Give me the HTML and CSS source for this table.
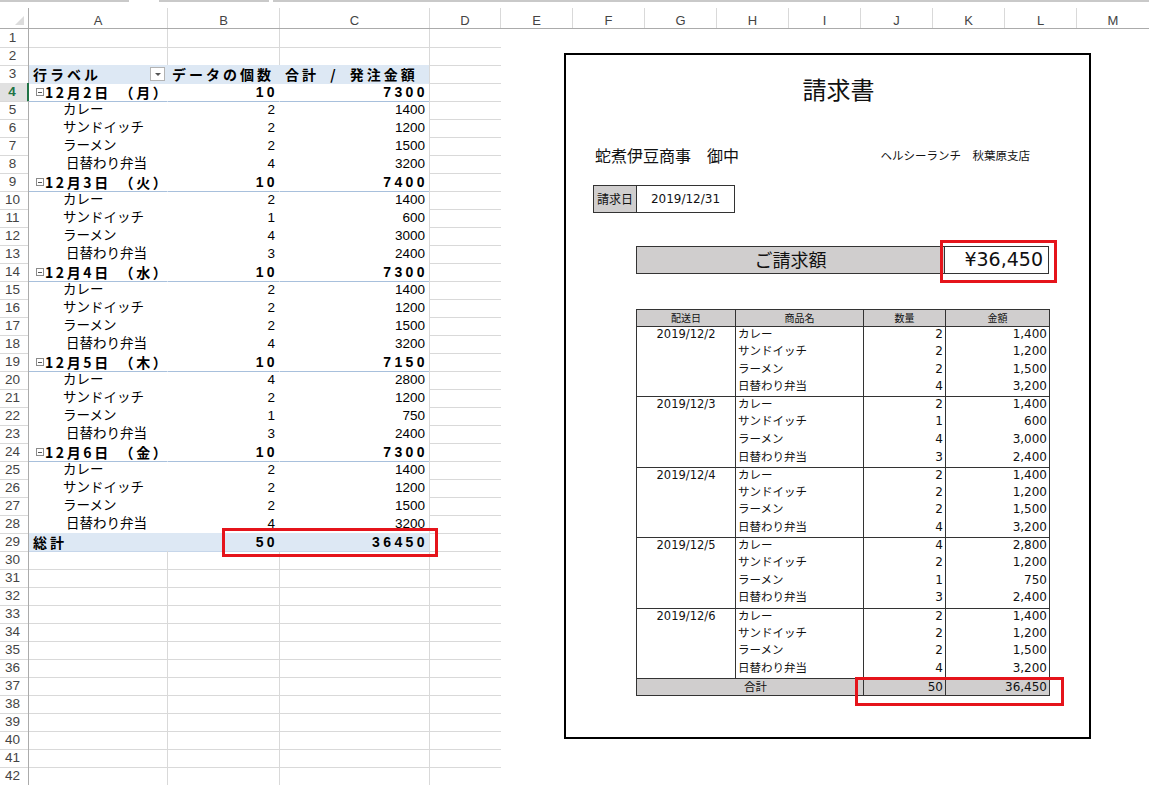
FILE: index.html
```html
<!DOCTYPE html>
<html lang="ja">
<head>
<meta charset="utf-8">
<title>請求書</title>
<link rel="stylesheet" href="styles.css">
</head>
<body>
<div class="screen">
  <div class="topbar"><span class="tb1"></span><span class="tb2"></span><span class="tb3"></span></div>
  <div class="colheads">
    <div class="ch corner"><span class="tri"></span></div>
    <div class="ch w-a">A</div>
    <div class="ch w-b">B</div>
    <div class="ch w-c">C</div>
    <div class="ch w-d">D</div>
    <div class="ch w-x">E</div>
    <div class="ch w-x">F</div>
    <div class="ch w-x">G</div>
    <div class="ch w-x">H</div>
    <div class="ch w-x">I</div>
    <div class="ch w-x">J</div>
    <div class="ch w-x">K</div>
    <div class="ch w-x">L</div>
    <div class="ch w-x last">M</div>
  </div>
  <div class="main">
    <div class="sheet">
      <div class="row"><div class="rh">1</div><div class="c ca"></div><div class="c cb"></div><div class="c cc"></div><div class="c cd"></div></div>
      <div class="row"><div class="rh">2</div><div class="c ca"></div><div class="c cb"></div><div class="c cc"></div><div class="c cd"></div></div>
      <div class="row pv pv-head"><div class="rh">3</div><div class="c ca"><span class="bt">行ラベル</span><span class="dd"></span></div><div class="c cb"><span class="bt">データの個数</span></div><div class="c cc"><span class="bt">合計 / 発注金額</span></div><div class="c cd"></div></div>

      <div class="row pv pv-group"><div class="rh active">4</div><div class="c ca"><span class="box"></span><span class="bt dt">12月2日 （月）</span></div><div class="c cb num bn">10</div><div class="c cc num bn">7300</div><div class="c cd"></div></div>
      <div class="row pv"><div class="rh">5</div><div class="c ca item">カレー</div><div class="c cb num">2</div><div class="c cc num">1400</div><div class="c cd"></div></div>
      <div class="row pv"><div class="rh">6</div><div class="c ca item">サンドイッチ</div><div class="c cb num">2</div><div class="c cc num">1200</div><div class="c cd"></div></div>
      <div class="row pv"><div class="rh">7</div><div class="c ca item">ラーメン</div><div class="c cb num">2</div><div class="c cc num">1500</div><div class="c cd"></div></div>
      <div class="row pv"><div class="rh">8</div><div class="c ca item item2">日替わり弁当</div><div class="c cb num">4</div><div class="c cc num">3200</div><div class="c cd"></div></div>

      <div class="row pv pv-group"><div class="rh">9</div><div class="c ca"><span class="box"></span><span class="bt dt">12月3日 （火）</span></div><div class="c cb num bn">10</div><div class="c cc num bn">7400</div><div class="c cd"></div></div>
      <div class="row pv"><div class="rh">10</div><div class="c ca item">カレー</div><div class="c cb num">2</div><div class="c cc num">1400</div><div class="c cd"></div></div>
      <div class="row pv"><div class="rh">11</div><div class="c ca item">サンドイッチ</div><div class="c cb num">1</div><div class="c cc num">600</div><div class="c cd"></div></div>
      <div class="row pv"><div class="rh">12</div><div class="c ca item">ラーメン</div><div class="c cb num">4</div><div class="c cc num">3000</div><div class="c cd"></div></div>
      <div class="row pv"><div class="rh">13</div><div class="c ca item item2">日替わり弁当</div><div class="c cb num">3</div><div class="c cc num">2400</div><div class="c cd"></div></div>

      <div class="row pv pv-group"><div class="rh">14</div><div class="c ca"><span class="box"></span><span class="bt dt">12月4日 （水）</span></div><div class="c cb num bn">10</div><div class="c cc num bn">7300</div><div class="c cd"></div></div>
      <div class="row pv"><div class="rh">15</div><div class="c ca item">カレー</div><div class="c cb num">2</div><div class="c cc num">1400</div><div class="c cd"></div></div>
      <div class="row pv"><div class="rh">16</div><div class="c ca item">サンドイッチ</div><div class="c cb num">2</div><div class="c cc num">1200</div><div class="c cd"></div></div>
      <div class="row pv"><div class="rh">17</div><div class="c ca item">ラーメン</div><div class="c cb num">2</div><div class="c cc num">1500</div><div class="c cd"></div></div>
      <div class="row pv"><div class="rh">18</div><div class="c ca item item2">日替わり弁当</div><div class="c cb num">4</div><div class="c cc num">3200</div><div class="c cd"></div></div>

      <div class="row pv pv-group"><div class="rh">19</div><div class="c ca"><span class="box"></span><span class="bt dt">12月5日 （木）</span></div><div class="c cb num bn">10</div><div class="c cc num bn">7150</div><div class="c cd"></div></div>
      <div class="row pv"><div class="rh">20</div><div class="c ca item">カレー</div><div class="c cb num">4</div><div class="c cc num">2800</div><div class="c cd"></div></div>
      <div class="row pv"><div class="rh">21</div><div class="c ca item">サンドイッチ</div><div class="c cb num">2</div><div class="c cc num">1200</div><div class="c cd"></div></div>
      <div class="row pv"><div class="rh">22</div><div class="c ca item">ラーメン</div><div class="c cb num">1</div><div class="c cc num">750</div><div class="c cd"></div></div>
      <div class="row pv"><div class="rh">23</div><div class="c ca item item2">日替わり弁当</div><div class="c cb num">3</div><div class="c cc num">2400</div><div class="c cd"></div></div>

      <div class="row pv pv-group"><div class="rh">24</div><div class="c ca"><span class="box"></span><span class="bt dt">12月6日 （金）</span></div><div class="c cb num bn">10</div><div class="c cc num bn">7300</div><div class="c cd"></div></div>
      <div class="row pv"><div class="rh">25</div><div class="c ca item">カレー</div><div class="c cb num">2</div><div class="c cc num">1400</div><div class="c cd"></div></div>
      <div class="row pv"><div class="rh">26</div><div class="c ca item">サンドイッチ</div><div class="c cb num">2</div><div class="c cc num">1200</div><div class="c cd"></div></div>
      <div class="row pv"><div class="rh">27</div><div class="c ca item">ラーメン</div><div class="c cb num">2</div><div class="c cc num">1500</div><div class="c cd"></div></div>
      <div class="row pv"><div class="rh">28</div><div class="c ca item item2">日替わり弁当</div><div class="c cb num">4</div><div class="c cc num">3200</div><div class="c cd"></div></div>

      <div class="row pv pv-total"><div class="rh">29</div><div class="c ca"><span class="bt">総計</span></div><div class="c cb num bn">50</div><div class="c cc num bn">36450</div><div class="c cd"></div></div>

      <div class="row"><div class="rh">30</div><div class="c ca"></div><div class="c cb"></div><div class="c cc"></div><div class="c cd"></div></div>
      <div class="row"><div class="rh">31</div><div class="c ca"></div><div class="c cb"></div><div class="c cc"></div><div class="c cd"></div></div>
      <div class="row"><div class="rh">32</div><div class="c ca"></div><div class="c cb"></div><div class="c cc"></div><div class="c cd"></div></div>
      <div class="row"><div class="rh">33</div><div class="c ca"></div><div class="c cb"></div><div class="c cc"></div><div class="c cd"></div></div>
      <div class="row"><div class="rh">34</div><div class="c ca"></div><div class="c cb"></div><div class="c cc"></div><div class="c cd"></div></div>
      <div class="row"><div class="rh">35</div><div class="c ca"></div><div class="c cb"></div><div class="c cc"></div><div class="c cd"></div></div>
      <div class="row"><div class="rh">36</div><div class="c ca"></div><div class="c cb"></div><div class="c cc"></div><div class="c cd"></div></div>
      <div class="row"><div class="rh">37</div><div class="c ca"></div><div class="c cb"></div><div class="c cc"></div><div class="c cd"></div></div>
      <div class="row"><div class="rh">38</div><div class="c ca"></div><div class="c cb"></div><div class="c cc"></div><div class="c cd"></div></div>
      <div class="row"><div class="rh">39</div><div class="c ca"></div><div class="c cb"></div><div class="c cc"></div><div class="c cd"></div></div>
      <div class="row"><div class="rh">40</div><div class="c ca"></div><div class="c cb"></div><div class="c cc"></div><div class="c cd"></div></div>
      <div class="row"><div class="rh">41</div><div class="c ca"></div><div class="c cb"></div><div class="c cc"></div><div class="c cd"></div></div>
      <div class="row"><div class="rh">42</div><div class="c ca"></div><div class="c cb"></div><div class="c cc"></div><div class="c cd"></div></div>
    </div>

    <div class="picture">
      <div class="doc">
        <div class="doc-title">請求書</div>
        <div class="parties">
          <span class="to">蛇煮伊豆商事　御中</span>
          <span class="from">ヘルシーランチ　秋葉原支店</span>
        </div>
        <div class="datebox">
          <span class="dlabel">請求日</span>
          <span class="dvalue">2019/12/31</span>
        </div>
        <div class="amount">
          <span class="alabel">ご請求額</span>
          <span class="avalue">¥36,450</span>
        </div>
        <table class="items">
          <colgroup><col class="k1"><col class="k2"><col class="k3"><col class="k4"></colgroup>
          <thead>
            <tr><th>配送日</th><th>商品名</th><th>数量</th><th>金額</th></tr>
          </thead>
          <tbody>
            <tr><td class="date" rowspan="4">2019/12/2</td><td>カレー</td><td class="n">2</td><td class="n">1,400</td></tr>
            <tr><td>サンドイッチ</td><td class="n">2</td><td class="n">1,200</td></tr>
            <tr><td>ラーメン</td><td class="n">2</td><td class="n">1,500</td></tr>
            <tr class="end"><td>日替わり弁当</td><td class="n">4</td><td class="n">3,200</td></tr>

            <tr><td class="date" rowspan="4">2019/12/3</td><td>カレー</td><td class="n">2</td><td class="n">1,400</td></tr>
            <tr><td>サンドイッチ</td><td class="n">1</td><td class="n">600</td></tr>
            <tr><td>ラーメン</td><td class="n">4</td><td class="n">3,000</td></tr>
            <tr class="end"><td>日替わり弁当</td><td class="n">3</td><td class="n">2,400</td></tr>

            <tr><td class="date" rowspan="4">2019/12/4</td><td>カレー</td><td class="n">2</td><td class="n">1,400</td></tr>
            <tr><td>サンドイッチ</td><td class="n">2</td><td class="n">1,200</td></tr>
            <tr><td>ラーメン</td><td class="n">2</td><td class="n">1,500</td></tr>
            <tr class="end"><td>日替わり弁当</td><td class="n">4</td><td class="n">3,200</td></tr>

            <tr><td class="date" rowspan="4">2019/12/5</td><td>カレー</td><td class="n">4</td><td class="n">2,800</td></tr>
            <tr><td>サンドイッチ</td><td class="n">2</td><td class="n">1,200</td></tr>
            <tr><td>ラーメン</td><td class="n">1</td><td class="n">750</td></tr>
            <tr class="end"><td>日替わり弁当</td><td class="n">3</td><td class="n">2,400</td></tr>

            <tr><td class="date" rowspan="4">2019/12/6</td><td>カレー</td><td class="n">2</td><td class="n">1,400</td></tr>
            <tr><td>サンドイッチ</td><td class="n">2</td><td class="n">1,200</td></tr>
            <tr><td>ラーメン</td><td class="n">2</td><td class="n">1,500</td></tr>
            <tr class="end"><td>日替わり弁当</td><td class="n">4</td><td class="n">3,200</td></tr>

            <tr class="total"><td colspan="2" class="tlabel">合計</td><td class="n">50</td><td class="n">36,450</td></tr>
          </tbody>
        </table>
      </div>
    </div>
  </div>

  <div class="mark mark-pivot"></div>
  <div class="mark mark-amount"></div>
  <div class="mark mark-total"></div>
</div>
</body>
</html>
```
FILE: styles.css
```css
* { box-sizing: border-box; margin: 0; padding: 0; }

body {
  width: 1149px;
  height: 785px;
  overflow: hidden;
  background: #fff;
  font-family: "Liberation Sans", "Noto Sans CJK JP", sans-serif;
  color: #000;
}

.screen {
  position: relative;
  width: 1149px;
  height: 785px;
  overflow: hidden;
}

/* top strip */
.topbar { height: 8px; display: flex; }
.topbar span { height: 2px; background: #c9c9c9; }
.tb1 { width: 129px; }
.tb2 { width: 110px; margin-left: 30px; }
.tb3 { flex: 1; margin-left: 4px; }

/* column headers */
.colheads {
  display: flex;
  height: 21px;
  border-bottom: 1px solid #ababab;
}
.ch {
  flex: none;
  border-right: 1px solid #d9d9d9;
  font-size: 13px;
  color: #444;
  text-align: center;
  line-height: 25px;
}
.ch.last { border-right: none; }
.corner { width: 29px; position: relative; border-right-color: #ababab; }
.tri {
  position: absolute;
  right: 4px;
  bottom: 3px;
  width: 0;
  height: 0;
  border-left: 9px solid transparent;
  border-bottom: 9px solid #dcdcdc;
}
.w-a { width: 139px; }
.w-b { width: 112px; }
.w-c { width: 150px; }
.w-d { width: 71px; }
.w-x { width: 72px; }

.main { display: flex; }

/* sheet grid */
.sheet { width: 501px; flex: none; }
.row {
  display: grid;
  grid-template-columns: 29px 139px 112px 150px 71px;
  height: 18px;
}
.rh {
  border-right: 1px solid #ababab;
  border-bottom: 1px solid #d9d9d9;
  font-size: 13.5px;
  color: #444;
  text-align: center;
  line-height: 18px;
  padding-right: 3px;
}
.rh.active {
  background: #e1e1e1;
  color: #217346;
  font-weight: bold;
  border-right: 2px solid #217346;
}
.c {
  border-right: 1px solid #d9d9d9;
  border-bottom: 1px solid #d9d9d9;
  font-size: 13.5px;
  line-height: 18px;
  white-space: nowrap;
  overflow: hidden;
}
.cd { border-right: none; }

/* pivot table */
.pv .ca, .pv .cb { border-right-color: transparent; }
.pv .ca, .pv .cb, .pv .cc { border-bottom-color: transparent; }
.pv-group .ca, .pv-group .cb, .pv-group .cc { border-bottom-color: #a8c0dc; }
.pv-head .ca, .pv-head .cb, .pv-head .cc,
.pv-total .ca, .pv-total .cb, .pv-total .cc { background: #dde8f4; }
.pv-total .ca, .pv-total .cb, .pv-total .cc { border-bottom-color: #c6d6ea; }

.pv .ca { padding-left: 4px; display: flex; align-items: center; }
.pv-head .ca { justify-content: space-between; padding-right: 2px; }
.pv-head .cb { padding-left: 4px; }
.pv-head .cc { padding-left: 5px; }
.pv-group .ca { padding-left: 7px; }

.bt {
  font-family: "Noto Sans CJK JP", sans-serif;
  font-weight: 700;
  font-size: 14px;
  letter-spacing: 3px;
  word-spacing: 5px;
  line-height: 18px;
  white-space: pre;
}
.bt.dt { word-spacing: 3px; letter-spacing: 2.6px; }
.item { padding-left: 34px !important; }
.item2 { padding-left: 37px !important; }

.num { text-align: right; padding-right: 4px; }
.bn {
  font-weight: 700;
  font-size: 14px;
  letter-spacing: 3.4px;
  padding-right: 1px;
}

.dd {
  width: 15px;
  height: 14px;
  border: 1px solid #b3b3b3;
  background: #fff;
  position: relative;
}
.dd::after {
  content: "";
  position: absolute;
  left: 4px;
  top: 5px;
  border-left: 3px solid transparent;
  border-right: 3px solid transparent;
  border-top: 3px solid #555;
}

.box {
  width: 8px;
  height: 8px;
  border: 1px solid #8a8a8a;
  position: relative;
  margin-right: 1px;
  flex: none;
}
.box::after {
  content: "";
  position: absolute;
  left: 1px;
  right: 1px;
  top: 2.5px;
  height: 1px;
  background: #555;
}

/* pasted invoice picture */
.picture {
  width: 648px;
  height: 756px;
  flex: none;
  padding: 24px 0 0 63px;
  background: #fff;
}
.doc {
  width: 527px;
  height: 686px;
  border: 2px solid #000;
  font-family: "DejaVu Sans", "Noto Sans CJK JP", sans-serif;
  color: #111;
}
.doc-title {
  margin-top: 18px;
  height: 32px;
  line-height: 32px;
  font-family: "Noto Sans CJK JP", sans-serif;
  font-size: 24px;
  text-align: center;
  padding-left: 22px;
}
.parties {
  margin-top: 40px;
  height: 20px;
  display: flex;
  justify-content: space-between;
  align-items: center;
  padding: 0 59px 0 29px;
  font-family: "Noto Sans CJK JP", sans-serif;
}
.to { font-size: 16px; }
.from { font-size: 11.5px; }

.datebox {
  margin: 20px 0 0 27px;
  display: flex;
  height: 28px;
  width: 142px;
}
.dlabel {
  width: 44px;
  border: 1px solid #333;
  background: #d0cece;
  font-family: "Noto Sans CJK JP", sans-serif;
  font-size: 12px;
  line-height: 26px;
  text-align: center;
}
.dvalue {
  width: 98px;
  border: 1px solid #333;
  border-left: none;
  font-size: 12px;
  line-height: 26px;
  text-align: center;
}

.amount {
  margin: 33px 0 0 70px;
  display: flex;
  height: 28px;
}
.alabel {
  width: 309px;
  border: 1px solid #333;
  background: #d0cece;
  font-family: "Noto Sans CJK JP", sans-serif;
  font-size: 18px;
  line-height: 25px;
  text-align: center;
}
.avalue {
  width: 104px;
  border: 1px solid #333;
  border-left: none;
  font-size: 19px;
  line-height: 25px;
  text-align: right;
  padding-right: 5px;
}

.items {
  margin: 35px 0 0 70px;
  width: 413px;
  border-collapse: collapse;
  table-layout: fixed;
  border: 1px solid #333;
}
.k1 { width: 99px; }
.k2 { width: 128px; }
.k3 { width: 82px; }
.k4 { width: 104px; }
.items th {
  height: 17px;
  background: #d0cece;
  border: 1px solid #333;
  font-family: "Noto Sans CJK JP", sans-serif;
  font-size: 10px;
  font-weight: 400;
  line-height: 14px;
  padding: 0;
}
.items td {
  height: 17.6px;
  border-left: 1px solid #333;
  border-right: 1px solid #333;
  font-size: 12px;
  line-height: 15px;
  padding: 0 2px;
  white-space: nowrap;
  vertical-align: top;
  font-family: "DejaVu Sans", "Noto Sans CJK JP", sans-serif;
}
.items td:not(.n):not(.date) { font-size: 11.5px; }
.items td.date {
  text-align: center;
  font-size: 11.5px;
}
.items td.n { text-align: right; }
.items tr.end td, .items td.date { border-bottom: 1px solid #333; }
.items tr.total td {
  background: #d0cece;
  border-top: 1px solid #333;
  vertical-align: middle;
}
.items td.tlabel { padding-left: 107px; }

/* red annotation boxes */
.mark {
  position: absolute;
  border: 3px solid #e5141b;
}
.mark-pivot { left: 222px; top: 528px; width: 216px; height: 29px; }
.mark-amount { left: 940px; top: 240px; width: 117px; height: 43px; }
.mark-total { left: 855px; top: 677px; width: 209px; height: 29px; }
```
